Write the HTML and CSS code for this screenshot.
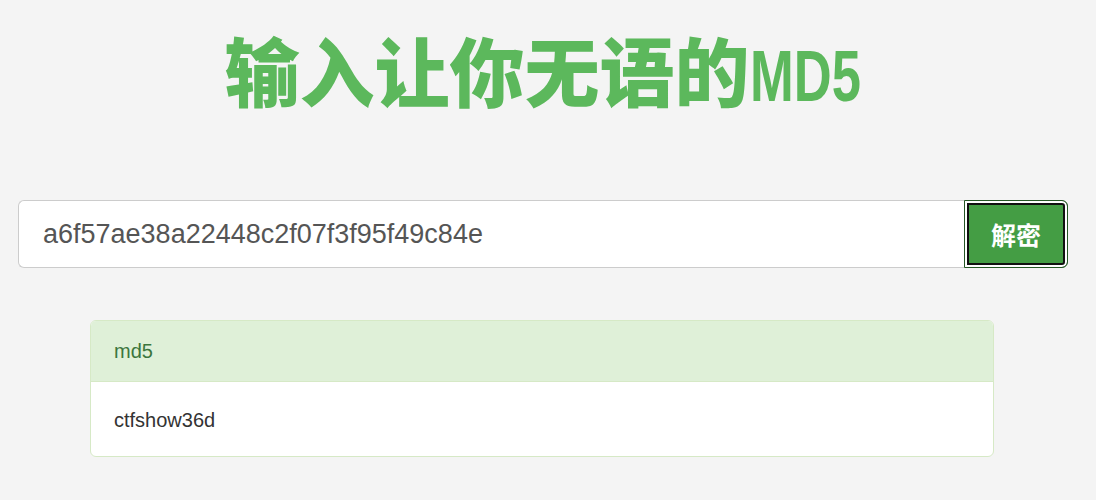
FILE: index.html
```html
<!DOCTYPE html>
<html lang="zh">
<head>
    <meta charset="UTF-8">
    <meta name="viewport" content="width=device-width, initial-scale=1.0">
    <title>MD5</title>
    <link rel="stylesheet" href="styles.css">
</head>
<body>
    <div class="page">
        <h1 class="title">输入让你无语的<span class="latin">MD5</span></h1>
        <form class="search" onsubmit="return false">
            <input type="text" class="search-input" value="a6f57ae38a22448c2f07f3f95f49c84e">
            <button type="submit" class="search-btn">解密</button>
        </form>
        <div class="panel">
            <div class="panel-heading">md5</div>
            <div class="panel-body">ctfshow36d</div>
        </div>
    </div>
</body>
</html>
```

FILE: styles.css
```css
body {
    margin: 0;
    padding: 0;
    background: #f4f4f4;
    font-family: "Liberation Sans", Arial, "Noto Sans CJK SC", sans-serif;
    color: #333;
}
.page {
    width: 1086px;
    padding-top: 19px;
}
.title {
    margin: 0;
    height: 100px;
    text-align: center;
    font-family: "Noto Sans CJK SC", sans-serif;
    font-weight: 900;
    font-size: 75px;
    line-height: 100px;
    color: #5cb85c;
}
.latin {
    display: inline-block;
    font-family: "Liberation Sans", Arial, sans-serif;
    font-weight: bold;
    font-size: 73px;
    transform: scaleX(0.72);
    transform-origin: left center;
    width: 112px;
    text-align: left;
}
.search {
    display: flex;
    margin: 81px 18px 0 18px;
    height: 68px;
}
.search-input {
    flex: 1;
    box-sizing: border-box;
    height: 68px;
    padding: 0 24px;
    border: 1px solid #ccc;
    border-right: none;
    border-radius: 6px 0 0 6px;
    background: #fff;
    font-family: "Liberation Sans", Arial, sans-serif;
    font-size: 27px;
    color: #555;
    outline: none;
}
.search-btn {
    box-sizing: border-box;
    width: 104px;
    height: 68px;
    border: 1px solid #255625;
    border-radius: 0 6px 6px 0;
    background: #449d44;
    box-shadow: inset 0 0 0 2px #fff, inset 0 0 0 4px #111;
    color: #fff;
    font-family: "Noto Sans CJK SC", sans-serif;
    font-weight: bold;
    font-size: 25px;
    cursor: pointer;
}
.panel {
    margin: 52px 92px 0 90px;
    border: 1px solid #d6e9c6;
    border-radius: 6px;
    background: #fff;
    overflow: hidden;
}
.panel-heading {
    height: 60px;
    line-height: 60px;
    padding: 0 23px;
    background: #dff0d8;
    border-bottom: 1px solid #d6e9c6;
    color: #3c763d;
    font-size: 20px;
}
.panel-body {
    height: 74px;
    line-height: 76px;
    padding: 0 23px;
    font-size: 20px;
    color: #333;
}
```
